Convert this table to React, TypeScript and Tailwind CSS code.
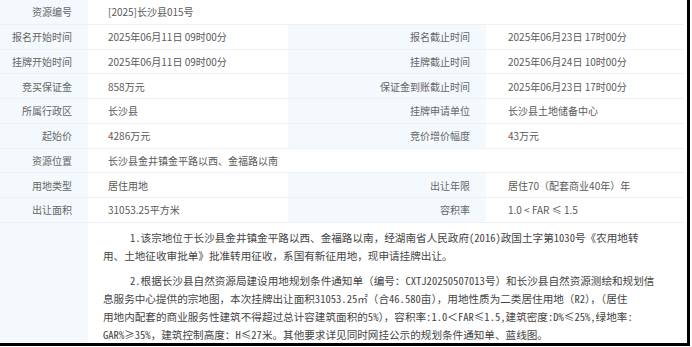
const rows: { cells: [string, string, string?, string?] }[] = [
  { cells: ["资源编号", "[2025]长沙县015号"] },
  { cells: ["报名开始时间", "2025年06月11日 09时00分", "报名截止时间", "2025年06月23日 17时00分"] },
  { cells: ["挂牌开始时间", "2025年06月11日 09时00分", "挂牌截止时间", "2025年06月24日 10时00分"] },
  { cells: ["竞买保证金", "858万元", "保证金到账截止时间", "2025年06月23日 17时00分"] },
  { cells: ["所属行政区", "长沙县", "挂牌申请单位", "长沙县土地储备中心"] },
  { cells: ["起始价", "4286万元", "竞价增价幅度", "43万元"] },
  { cells: ["资源位置", "长沙县金井镇金平路以西、金福路以南"] },
  { cells: ["用地类型", "居住用地", "出让年限", "居住70（配套商业40年）年"] },
  { cells: ["出让面积", "31053.25平方米", "容积率", "1.0 < FAR ≤ 1.5"] },
];

const para1 = [
  "1.该宗地位于长沙县金井镇金平路以西、金福路以南，经湖南省人民政府(2016)政国土字第1030号《农用地转",
  "用、土地征收审批单》批准转用征收，系国有新征用地，现申请挂牌出让。",
];

const para2 = [
  "2.根据长沙县自然资源局建设用地规划条件通知单（编号：CXTJ20250507013号）和长沙县自然资源测绘和规划信",
  "息服务中心提供的宗地图，本次挂牌出让面积31053.25㎡（合46.580亩），用地性质为二类居住用地（R2），（居住",
  "用地内配套的商业服务性建筑不得超过总计容建筑面积的5%），容积率:1.0＜FAR≤1.5,建筑密度:D%≤25%,绿地率:",
  "GAR%≥35%，建筑控制高度：H≤27米。其他要求详见同时网挂公示的规划条件通知单、蓝线图。",
];

function Label({ text }: { text: string }) {
  return (
    <div className="flex h-[24.75px] items-center justify-end border-b border-[#eef0f2] bg-[#f3f9fd] pr-4 text-[#666]">
      {text}
    </div>
  );
}

function Value({ text, span, pad = "pl-5" }: { text: string; span?: boolean; pad?: string }) {
  return (
    <div
      className={`flex h-[24.75px] items-center border-b border-[#eef0f2] bg-white text-[#5a5a5a] ${pad} ${
        span ? "col-span-3" : ""
      }`}
    >
      {text}
    </div>
  );
}

export default function App() {
  return (
    <div className="h-[346px] w-[690px] overflow-hidden border-r-[3px] border-b-[3px] border-black bg-white">
      <div
        className="w-[684px] text-[10px]"
        style={{ fontFamily: '"Noto Sans CJK SC", "Noto Sans", sans-serif' }}
      >
        {/* 基本信息表 */}
        <div className="grid grid-cols-[88px_200px_198px_198px]">
          {rows.map((r) =>
            r.cells[2] ? (
              <div key={r.cells[0]} className="contents">
                <Label text={r.cells[0]} />
                <Value text={r.cells[1]} />
                <Label text={r.cells[2]} />
                <Value text={r.cells[3] ?? ""} pad="pl-[22px]" />
              </div>
            ) : (
              <div key={r.cells[0]} className="contents">
                <Label text={r.cells[0]} />
                <Value text={r.cells[1]} span />
              </div>
            )
          )}
        </div>

        {/* 说明 */}
        <div className="flex h-[121px]">
          <div className="w-[88px] shrink-0 bg-[#f3f9fd]" />
          <div
            className="flex-1 pt-[6px] pl-[15px] text-[10.6px] leading-[18px] whitespace-nowrap text-[#444]"
            style={{ fontFamily: '"Noto Sans Mono CJK SC", "Noto Sans CJK SC", monospace' }}
          >
            <div>
              {para1.map((l, i) => (
                <div key={i} className={i === 0 ? "pl-[27px]" : ""}>
                  {l}
                </div>
              ))}
            </div>
            <div className="mt-[7px]">
              {para2.map((l, i) => (
                <div key={i} className={i === 0 ? "pl-[27px]" : ""}>
                  {l}
                </div>
              ))}
            </div>
          </div>
        </div>
      </div>
    </div>
  );
}
